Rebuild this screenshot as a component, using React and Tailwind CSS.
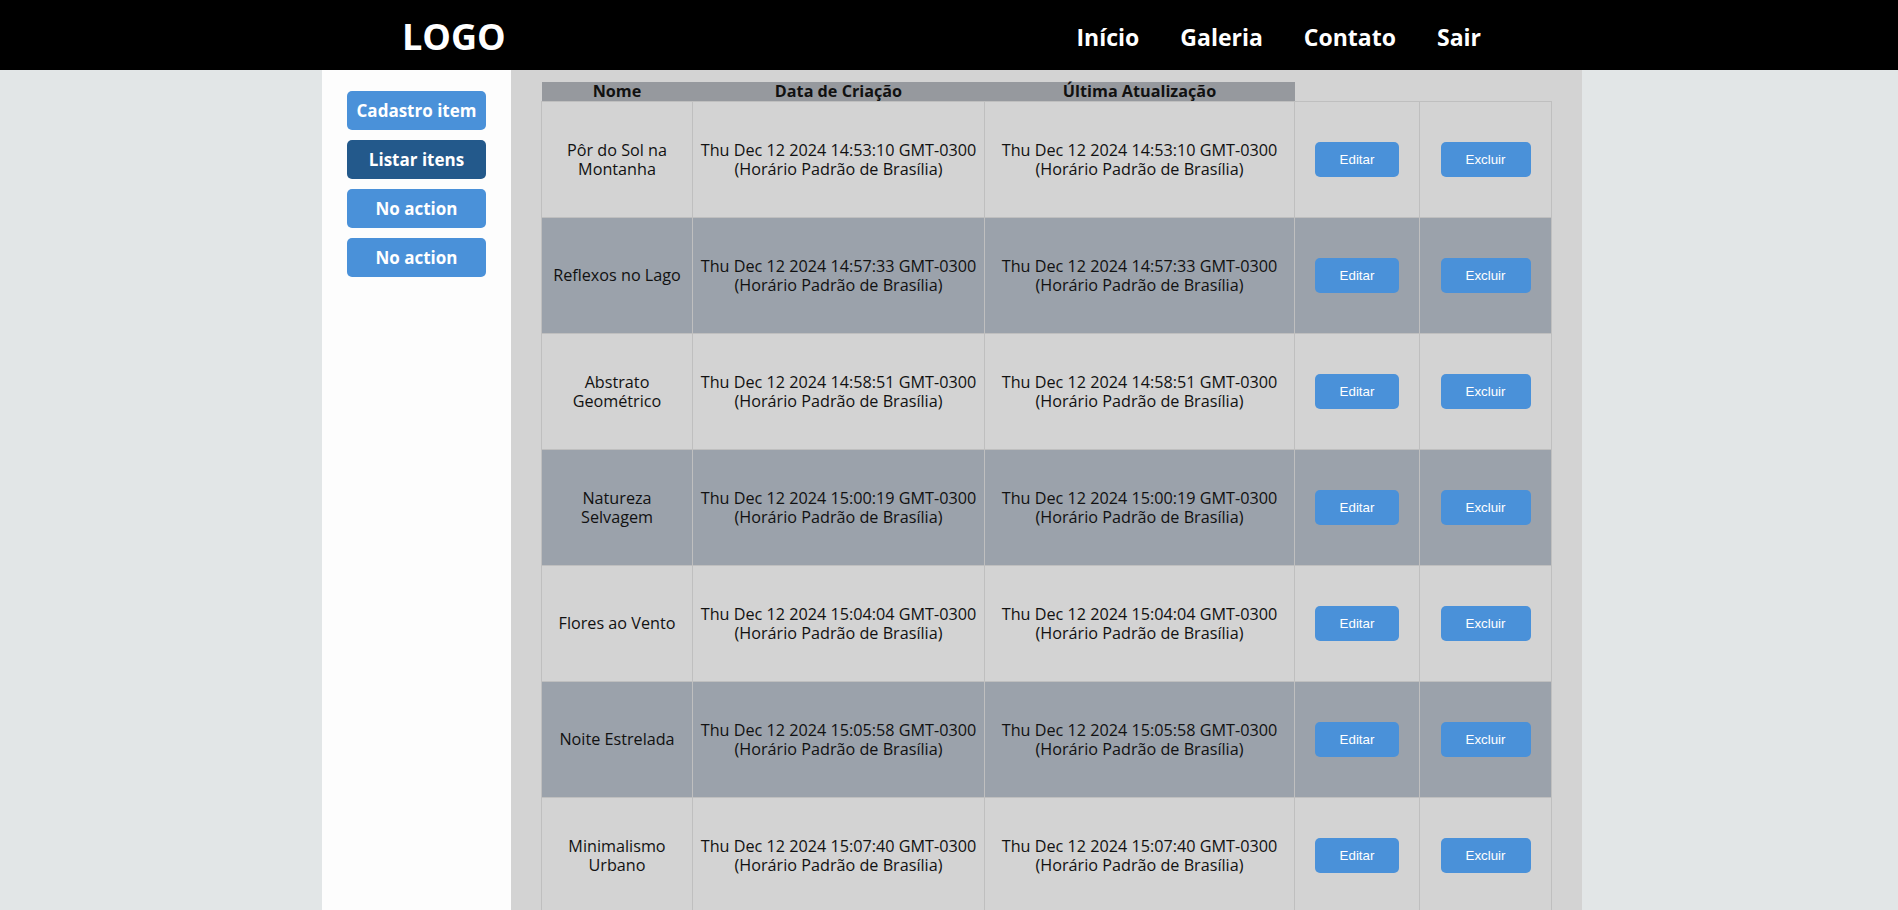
const items = [
  { nome: 'Pôr do Sol na Montanha', hora: '14:53:10' },
  { nome: 'Reflexos no Lago', hora: '14:57:33' },
  { nome: 'Abstrato Geométrico', hora: '14:58:51' },
  { nome: 'Natureza Selvagem', hora: '15:00:19' },
  { nome: 'Flores ao Vento', hora: '15:04:04' },
  { nome: 'Noite Estrelada', hora: '15:05:58' },
  { nome: 'Minimalismo Urbano', hora: '15:07:40' },
]

const font = { fontFamily: '"Open Sans", "Noto Sans", sans-serif' }

function dataTexto(hora) {
  return `Thu Dec 12 2024 ${hora} GMT-0300 (Horário Padrão de Brasília)`
}

function SideButton({ children, active }) {
  return (
    <button
      className={
        active
          ? 'h-[39px] w-[139px] rounded-[5px] bg-[#23598b] text-[17px] font-bold text-white'
          : 'h-[39px] w-[139px] rounded-[5px] bg-[#4a91d9] text-[17px] font-bold text-white'
      }
    >
      {children}
    </button>
  )
}

function ActionButton({ children }) {
  return (
    <button className="h-[35px] rounded-[5px] bg-[#4a91d9] px-[25px] font-['Liberation_Sans',Arial,sans-serif] text-[13.33px] text-white">
      {children}
    </button>
  )
}

export default function App() {
  return (
    <div className="min-h-screen bg-[#e2e6e7] text-[#111]" style={font}>
      <header className="h-[70px] bg-black">
        <div className="ml-[322px] flex h-full w-[1260px] items-center justify-between pl-[80px] pr-[101px] pt-[4px]">
          <h1 className="text-[36px] font-bold leading-none text-white">LOGO</h1>
          <nav className="flex gap-[41px] text-[23px] font-bold text-white">
            <a>Início</a>
            <a>Galeria</a>
            <a>Contato</a>
            <a>Sair</a>
          </nav>
        </div>
      </header>

      <div className="ml-[322px] flex min-h-[840px] w-[1260px]">
        <aside className="flex w-[189px] flex-col gap-[10px] bg-[#fdfdfd] px-[25px] pt-[21px]">
          <SideButton>Cadastro item</SideButton>
          <SideButton active>Listar itens</SideButton>
          <SideButton>No action</SideButton>
          <SideButton>No action</SideButton>
        </aside>

        <main className="flex-1 bg-[#d3d3d3] pl-[30px] pt-[12px]">
          <table className="w-[1010px] table-fixed border-collapse text-[16.2px]">
            <colgroup>
              <col className="w-[151px]" />
              <col className="w-[292px]" />
              <col className="w-[310px]" />
              <col className="w-[125px]" />
              <col className="w-[132px]" />
            </colgroup>
            <thead>
              <tr className="h-[19px] leading-[19px]">
                <th className="bg-[#96999e] font-bold">Nome</th>
                <th className="bg-[#96999e] font-bold">Data de Criação</th>
                <th className="bg-[#96999e] font-bold">Última Atualização</th>
                <th></th>
                <th></th>
              </tr>
            </thead>
            <tbody>
              {items.map((item, i) => (
                <tr
                  key={item.nome}
                  className={i % 2 === 0 ? 'h-[116px] bg-[#d3d3d3]' : 'h-[116px] bg-[#9ba2ab]'}
                >
                  <td className="border border-[#bfbfbf] px-2 text-center leading-[19px]">
                    {item.nome}
                  </td>
                  <td className="border border-[#bfbfbf] px-[5px] text-center leading-[19px]">
                    {dataTexto(item.hora)}
                  </td>
                  <td className="border border-[#bfbfbf] px-[5px] text-center leading-[19px]">
                    {dataTexto(item.hora)}
                  </td>
                  <td className="border border-[#bfbfbf] text-center">
                    <ActionButton>Editar</ActionButton>
                  </td>
                  <td className="border border-[#bfbfbf] text-center">
                    <ActionButton>Excluir</ActionButton>
                  </td>
                </tr>
              ))}
            </tbody>
          </table>
        </main>
      </div>
    </div>
  )
}
